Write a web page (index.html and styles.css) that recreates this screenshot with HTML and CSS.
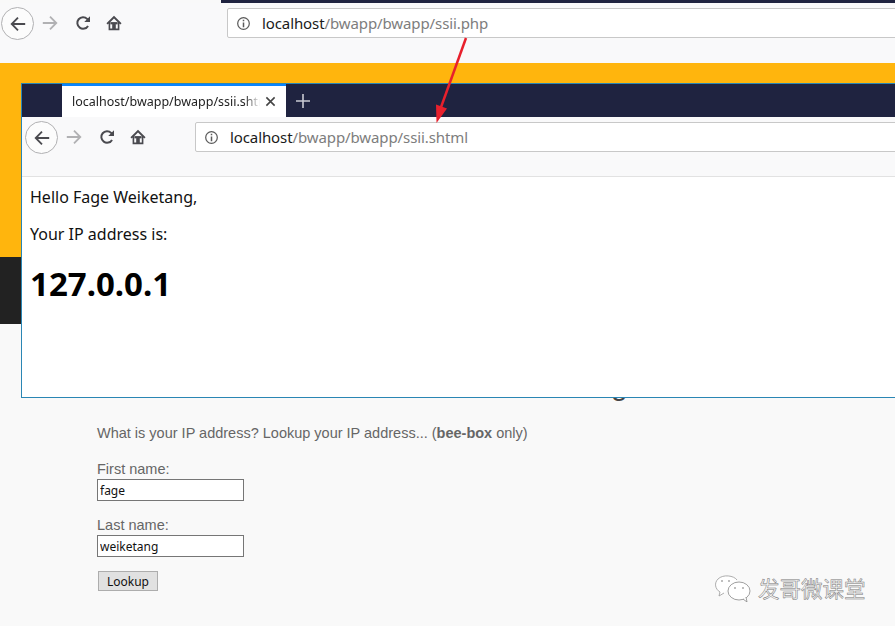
FILE: index.html
```html
<!DOCTYPE html>
<html lang="en">
<head>
<meta charset="UTF-8" />
<meta name="viewport" content="width=device-width, initial-scale=1" />
<title>bWAPP SSI</title>
<link rel="stylesheet" href="styles.css">
</head>
<body>
  <svg width="0" height="0" class="defs">
    <symbol id="i-left" viewBox="0 0 20 20"><path d="M18 10H3M10 3l-7 7 7 7" fill="none" stroke="currentColor" stroke-width="2"/></symbol>
    <symbol id="i-right" viewBox="0 0 20 20"><path d="M2 10h15M10 3l7 7-7 7" fill="none" stroke="currentColor" stroke-width="2"/></symbol>
    <symbol id="i-reload" viewBox="0 0 20 20"><path d="M15.6 13.2A6.4 6.4 0 1 1 14.6 5.4L16.6 7.6" fill="none" stroke="currentColor" stroke-width="2.2"/><path d="M17.8 2.6V9h-6.4z" fill="currentColor"/></symbol>
    <symbol id="i-home" viewBox="0 0 20 20"><path d="M10 2L1.6 10.2 3 11.6l1-1V18h12v-7.4l1 1 1.4-1.4zM10 5l4.2 4.2V16h-2.2v-4.4a2 2 0 0 0-4 0V16H5.800V9.200z" fill="currentColor" fill-rule="evenodd"/><rect x="6" y="9" width="8" height="2.500" fill="currentColor"/></symbol>
    <symbol id="i-info" viewBox="0 0 16 16"><circle cx="8" cy="8" r="6.200" fill="none" stroke="currentColor" stroke-width="1.300"/><path d="M7.200 7h1.600v5H7.200zM7.200 4h1.600v1.600H7.200z" fill="currentColor"/></symbol>
  </svg>

  <div class="top-strip"></div>
  <div class="toolbar toolbar-outer">
    <span class="back"><svg class="ico"><use href="#i-left"/></svg></span>
    <svg class="ico forward"><use href="#i-right"/></svg>
    <svg class="ico reload"><use href="#i-reload"/></svg>
    <svg class="ico home"><use href="#i-home"/></svg>
    <div class="urlbar">
      <svg class="info"><use href="#i-info"/></svg>
      <span class="host">localhost</span><span class="path">/bwapp/bwapp/ssii.php</span>
    </div>
  </div>

  <div class="band-orange"></div>
  <div class="band-dark"></div>

  <main class="content">
    <h1 class="title">g</h1>
    <p class="lead">What is your IP address? Lookup your IP address... (<b>bee-box</b> only)</p>
    <form class="lookup">
      <label class="field">First name:<input type="text" value="fage"></label>
      <label class="field">Last name:<input type="text" value="weiketang"></label>
      <button type="button" class="btn">Lookup</button>
    </form>
  </main>

  <!-- second browser window pasted over the page -->
  <section class="window">
    <div class="tabstrip">
      <div class="tab">
        <span class="tab-title">localhost/bwapp/bwapp/ssii.shtml</span>
        <svg class="tab-close" viewBox="0 0 12 12"><path d="M1.500 1.500l9 9M10.500 1.500l-9 9" stroke="currentColor" stroke-width="1.700" fill="none"/></svg>
      </div>
      <svg class="tab-new" viewBox="0 0 14 14"><path d="M7 0v14M0 7h14" stroke="currentColor" stroke-width="1.600" fill="none"/></svg>
    </div>
    <div class="toolbar toolbar-inner">
      <span class="back"><svg class="ico"><use href="#i-left"/></svg></span>
      <svg class="ico forward"><use href="#i-right"/></svg>
      <svg class="ico reload"><use href="#i-reload"/></svg>
      <svg class="ico home"><use href="#i-home"/></svg>
      <div class="urlbar">
        <svg class="info"><use href="#i-info"/></svg>
        <span class="host">localhost</span><span class="path">/bwapp/bwapp/ssii.shtml</span>
      </div>
    </div>
    <div class="result">
      <p class="hello">Hello Fage Weiketang,</p>
      <p class="hello">Your IP address is:</p>
      <h2 class="ip">127.0.0.1</h2>
    </div>
  </section>

  <svg class="arrow" viewBox="0 0 895 626" width="895" height="626">
    <path d="M466 38L440 110" stroke="#e8202c" stroke-width="2.500" fill="none"/>
    <path d="M436.500 123L436 104.500 447 108.500z" fill="#e8202c"/>
  </svg>

  <div class="watermark">
    <svg class="wm-icon" viewBox="0 0 38 28" width="38" height="28">
      <path d="M23 6C20 1.500 9 0 4 5c-4 4-3 10 2 13l-1 4 5-3" fill="#fff" stroke="#999" stroke-width=".8"/>
      <ellipse cx="25" cy="17" rx="11" ry="9" fill="#fff" stroke="#888" stroke-width=".8"/>
      <path d="M29 25l4 3-1-5" fill="#fff" stroke="#888" stroke-width=".8"/>
      <circle cx="21" cy="14" r="1" fill="#aaa"/><circle cx="29" cy="14" r="1" fill="#aaa"/>
      <circle cx="8" cy="7" r="1" fill="#aaa"/><circle cx="15" cy="7" r="1" fill="#aaa"/>
    </svg>
    <span class="wm-text">发哥微课堂</span>
  </div>
</body>
</html>
```

FILE: styles.css
```css
* {
  box-sizing: border-box;
}
html, body {
  margin: 0;
  height: 626px;
}
body {
  position: relative;
  width: 895px;
  overflow: hidden;
  background: #f9f9f9;
  font-family: "Liberation Sans", Arial, sans-serif;
}
.defs {
  position: absolute;
}

/* browser chrome, used twice */
.top-strip {
  height: 3px;
  margin-left: 221px;
  background: #1f2340;
}
.toolbar {
  display: flex;
  align-items: flex-start;
  padding-top: 5px;
  background: #f9f9fa;
  color: #4a4a4f;
}
.toolbar-outer {
  height: 60px;
  padding-left: 1px;
}
.toolbar-inner {
  height: 60px;
  padding-left: 3px;
  border-bottom: 1px solid #e2e2e2;
}
.back {
  flex: none;
  width: 33px;
  height: 33px;
  margin-top: -1px;
  display: flex;
  align-items: center;
  justify-content: center;
  border: 1px solid #b1b1b3;
  border-radius: 50%;
  background: #fcfcfc;
}
.ico {
  flex: none;
  width: 18px;
  height: 18px;
}
.forward {
  margin: 6px 0 0 7px;
  color: #b1b1b3;
}
.reload {
  margin: 6px 0 0 15px;
}
.home {
  margin: 6px 0 0 13px;
}
.urlbar {
  flex: 1;
  height: 30px;
  margin-left: 104px;
  margin-right: -6px;
  padding-left: 8px;
  display: flex;
  align-items: center;
  background: #fff;
  border: 1px solid #c8c8c8;
  border-radius: 2px;
  font-family: "Noto Sans", sans-serif;
  font-size: 15px;
  letter-spacing: -0.1px;
}
.toolbar-inner .urlbar {
  margin-left: 48px;
}
.info {
  width: 15px;
  height: 15px;
  margin-right: 11px;
  color: #5a5a5a;
}
.host {
  color: #1a1a1a;
}
.path {
  color: #7d7d7d;
}

/* page behind */
.band-orange {
  height: 194px;
  background: #ffb50d;
}
.band-dark {
  height: 67px;
  background: #222;
}
.content {
  padding-left: 97px;
  color: #666;
  font-size: 14.500px;
}
.title {
  margin: 49px 0 0 514px;
  height: 24px;
  font-size: 30px;
  font-weight: normal;
  line-height: 24px;
  color: #444;
}
.lead {
  margin: 28px 0 0;
  line-height: 17px;
}
.lookup {
  display: flex;
  flex-direction: column;
  align-items: flex-start;
  margin-top: 18px;
}
.field {
  display: flex;
  flex-direction: column;
  margin-bottom: 15px;
  line-height: 19px;
}
.field input {
  width: 147px;
  height: 22px;
  padding: 0 2px;
  border: 1px solid #767676;
  background: #fff;
  color: #111;
  font-family: "Noto Sans", sans-serif;
  font-size: 12px;
}
.btn {
  width: 60px;
  height: 20px;
  margin: -1px 0 0 1px;
  padding: 0;
  border: 1px solid #adadad;
  background: #e1e1e1;
  color: #111;
  font-family: "Noto Sans", sans-serif;
  font-size: 12px;
}

/* pasted window */
.window {
  position: absolute;
  left: 21px;
  top: 83px;
  width: 880px;
  height: 315px;
  background: #fff;
  border: 1px solid #2a86b4;
  display: flex;
  flex-direction: column;
}
.tabstrip {
  height: 33px;
  display: flex;
  align-items: center;
  padding-left: 40px;
  background: #1f2340;
  color: #c9cad2;
}
.tab {
  width: 224px;
  height: 33px;
  display: flex;
  align-items: center;
  padding: 0 10px;
  background: #fff;
  border-top: 2px solid #0a84ff;
  color: #222;
  font-family: "Noto Sans", sans-serif;
  font-size: 12.500px;
}
.tab-title {
  flex: 1;
  overflow: hidden;
  white-space: nowrap;
  -webkit-mask-image: linear-gradient(to right, #000 92%, transparent);
  mask-image: linear-gradient(to right, #000 92%, transparent);
}
.tab-close {
  flex: none;
  width: 11px;
  height: 11px;
  margin-left: 5px;
  color: #444;
}
.tab-new {
  width: 14px;
  height: 14px;
  margin-left: 10px;
}
.toolbar-inner .ico,
.toolbar-inner .back {
  flex: none;
}
.result {
  flex: 1;
  padding: 9px 8px;
  color: #111;
  font-family: "Noto Sans", sans-serif;
}
.hello {
  margin: 0 0 15px;
  font-size: 16px;
  line-height: 22px;
}
.ip {
  margin: 0;
  padding-top: 2px;
  font-size: 33px;
  font-weight: 700;
  line-height: 44px;
  color: #000;
}

.arrow {
  position: absolute;
  left: 0;
  top: 0;
  pointer-events: none;
}
.watermark {
  position: absolute;
  left: 714px;
  top: 574px;
  display: flex;
  align-items: center;
  gap: 6px;
}
.wm-text {
  font-family: "Noto Sans CJK SC", sans-serif;
  font-size: 21.500px;
  line-height: 26px;
  color: #f4f4f4;
  -webkit-text-stroke: 0.5px #777;
}
```
